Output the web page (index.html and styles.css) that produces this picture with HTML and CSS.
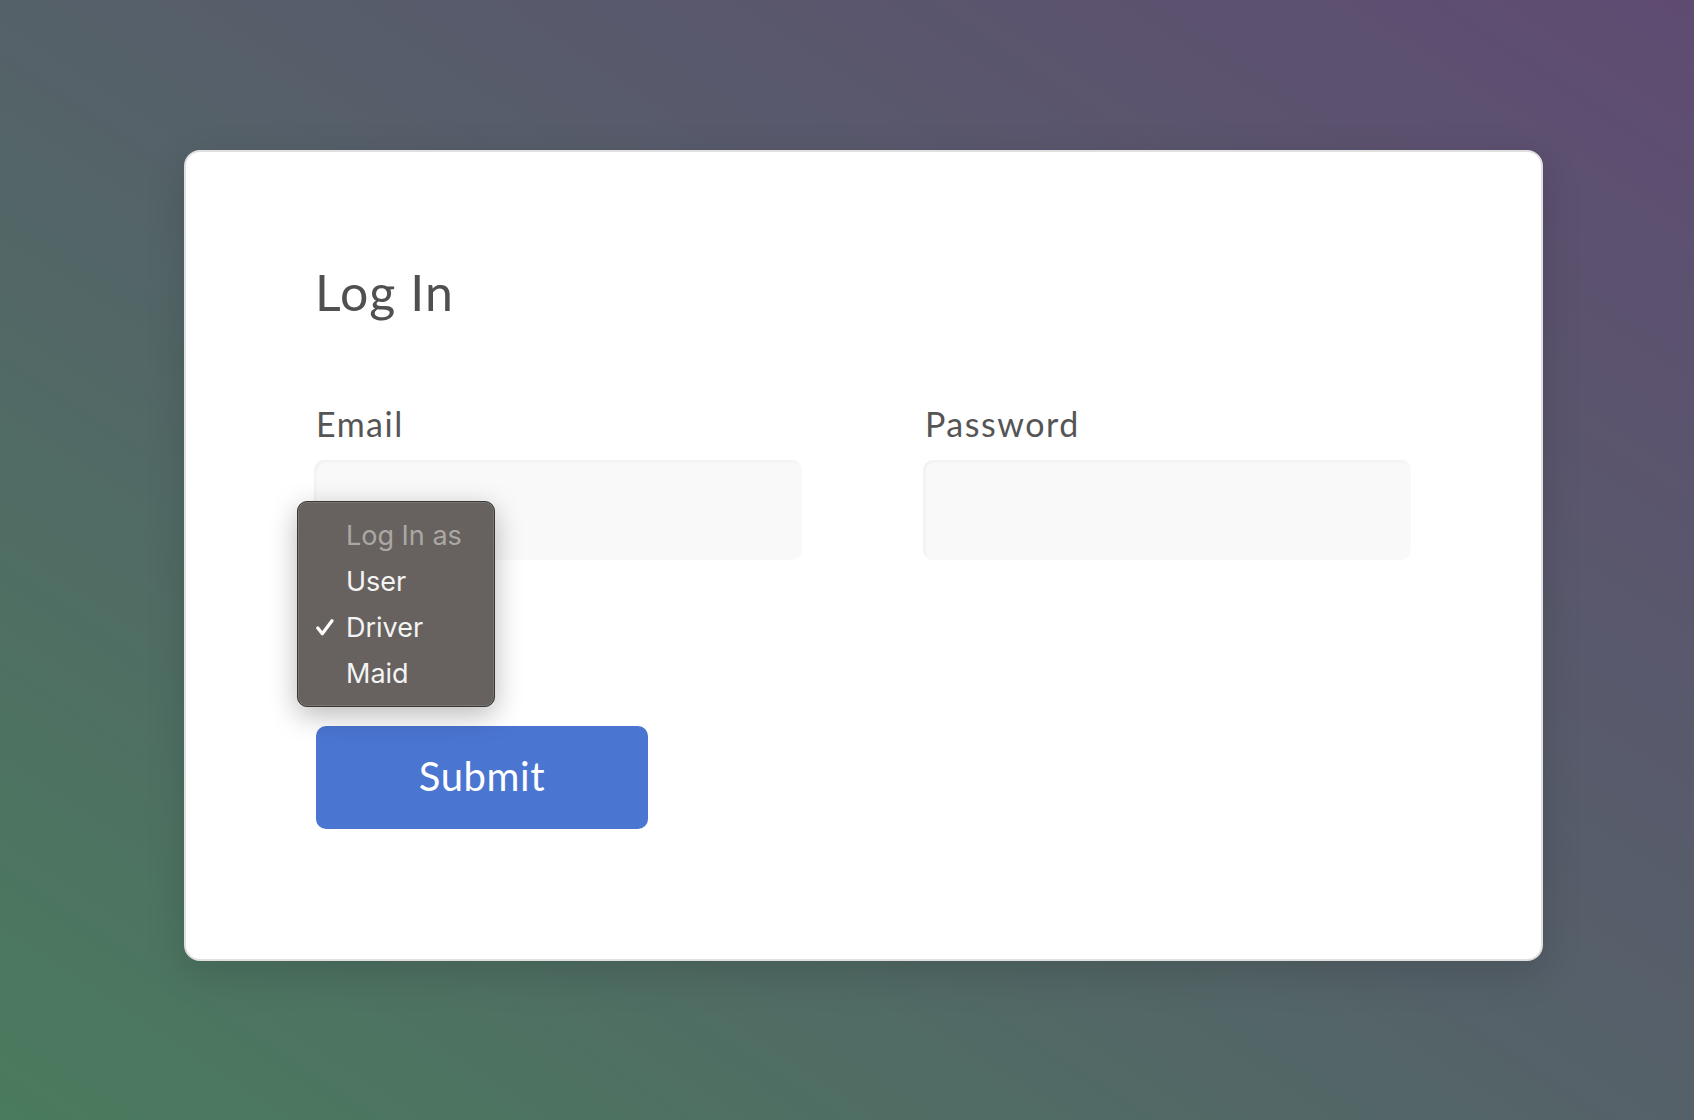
FILE: index.html
```html
<!DOCTYPE html>
<html lang="en">
<head>
<meta charset="utf-8">
<title>Log In</title>
<link rel="stylesheet" href="styles.css">
</head>
<body>
<main class="page">
  <form class="card">
    <h1 class="title">Log In</h1>
    <div class="fields">
      <div class="field">
        <label class="label">Email</label>
        <div class="input"></div>
      </div>
      <div class="field">
        <label class="label">Password</label>
        <div class="input"></div>
      </div>
    </div>
    <div class="role-row">
      <div class="menu">
        <div class="menu-item menu-header">Log In as</div>
        <div class="menu-item">User</div>
        <div class="menu-item checked">
          <svg class="check" width="18" height="17" viewBox="0 0 18 17"><path d="M1.8 9 L6.3 14.8 L16 1.8" fill="none" stroke="#ffffff" stroke-width="3.2" stroke-linecap="round" stroke-linejoin="round"/></svg>
          Driver
        </div>
        <div class="menu-item">Maid</div>
      </div>
    </div>
    <button type="button" class="submit">Submit</button>
  </form>
</main>
</body>
</html>
```

FILE: styles.css
```css
html, body {
  margin: 0;
  padding: 0;
  height: 100%;
}

body {
  background: linear-gradient(to top right, #4a7b5e 0%, #556169 50%, #5f4b72 100%);
  font-family: "Lato", "Liberation Sans", sans-serif;
  overflow: hidden;
}

.page {
  padding: 150px 0 0 184px;
}

.card {
  box-sizing: border-box;
  width: 1359px;
  height: 811px;
  background: #ffffff;
  border: 2px solid #e0e0e0;
  border-radius: 16px;
  box-shadow: 0 12px 40px rgba(0, 0, 0, 0.14);
  padding: 110px 130px 0 127px;
}

.title {
  margin: 0;
  font-size: 50px;
  line-height: 60px;
  font-weight: 400;
  letter-spacing: 1.1px;
  color: #505050;
  padding-left: 2px;
}

.fields {
  display: grid;
  grid-template-columns: 488px 488px;
  column-gap: 121px;
  margin: 82px 0 0 1px;
}

.field {
  display: flex;
  flex-direction: column;
}

.label {
  font-size: 34px;
  line-height: 40px;
  letter-spacing: 1.5px;
  color: #555555;
  padding-left: 2px;
}

.input {
  margin-top: 16px;
  height: 100px;
  background: #f9f9f9;
  border-radius: 10px;
  box-shadow: inset 2px 2px 3px rgba(0, 0, 0, 0.035);
}

.role-row {
  position: relative;
  height: 166px;
}

.menu {
  position: absolute;
  top: -59px;
  left: -16px;
  box-sizing: border-box;
  width: 198px;
  padding: 11px 0 9px 48px;
  background: #67625f;
  border: 1px solid #3a3837;
  border-radius: 10px;
  box-shadow: inset 0 0 0 1px rgba(255, 255, 255, 0.12), 0 8px 28px rgba(0, 0, 0, 0.28);
  font-family: "Inter", "Liberation Sans", sans-serif;
  font-size: 27px;
  line-height: 46px;
  z-index: 2;
}

.menu-item {
  position: relative;
  color: #f4f4f4;
  white-space: nowrap;
}

.menu-header {
  color: #aba7a4;
}

.check {
  position: absolute;
  left: -30px;
  top: 14px;
}

.submit {
  display: block;
  margin-left: 3px;
  width: 332px;
  height: 103px;
  border: none;
  border-radius: 10px;
  background: #4a75d1;
  color: #ffffff;
  font-family: "Lato", "Liberation Sans", sans-serif;
  font-size: 40px;
  letter-spacing: 0.6px;
  padding: 0 0 4px 0;
}
```
